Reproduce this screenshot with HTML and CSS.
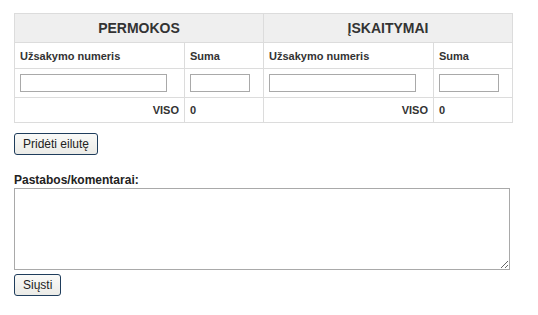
FILE: index.html
```html
<!DOCTYPE html>
<html lang="lt">
<head>
    <meta charset="UTF-8">
    <title>Permokos ir įskaitymai</title>
    <link rel="stylesheet" href="styles.css">
</head>
<body>
    <div class="page">
        <!-- Lentelė su permokomis ir įskaitymais -->
        <table class="grid">
            <colgroup>
                <col class="col-num">
                <col class="col-sum">
                <col class="col-num">
                <col class="col-sum">
            </colgroup>
            <tr class="head">
                <th colspan="2">PERMOKOS</th>
                <th colspan="2">ĮSKAITYMAI</th>
            </tr>
            <tr class="labels">
                <td>Užsakymo numeris</td>
                <td>Suma</td>
                <td>Užsakymo numeris</td>
                <td>Suma</td>
            </tr>
            <tr class="inputs">
                <td><input type="text" class="field-num"></td>
                <td><input type="text" class="field-sum"></td>
                <td><input type="text" class="field-num"></td>
                <td><input type="text" class="field-sum"></td>
            </tr>
            <tr class="total">
                <td class="total-label">VISO</td>
                <td>0</td>
                <td class="total-label">VISO</td>
                <td>0</td>
            </tr>
        </table>

        <button class="btn btn-add">Pridėti eilutę</button>

        <label class="notes-label" for="notes">Pastabos/komentarai:</label>
        <textarea id="notes" class="notes"></textarea>

        <button class="btn">Siųsti</button>
    </div>
</body>
</html>
```

FILE: styles.css
```css
body {
    margin: 0;
    font-family: "Liberation Sans", Arial, sans-serif;
    color: #222;
}
.page {
    padding: 13px 14px;
    display: flex;
    flex-direction: column;
    align-items: flex-start;
}
.grid {
    width: 499px;
    border-collapse: collapse;
    table-layout: fixed;
}
.col-num {
    width: 170px;
}
.col-sum {
    width: 79px;
}
.grid th,
.grid td {
    border: 1px solid #dcdcdc;
    padding: 0 5px;
    text-align: left;
}
.head th {
    height: 28px;
    background-color: #efefef;
    font-size: 14px;
    font-weight: bold;
    text-align: center;
    color: #333;
}
.labels td {
    height: 25px;
    font-size: 11px;
    font-weight: bold;
    color: #333;
}
.inputs td {
    height: 28px;
}
.total td {
    height: 24px;
    font-size: 11px;
    font-weight: bold;
    color: #333;
}
.total td.total-label {
    text-align: right;
}
.inputs input {
    box-sizing: border-box;
    height: 18px;
    border: 1px solid #a9a9a9;
    padding: 1px 2px;
    margin: 0;
    display: block;
}
.field-num {
    width: 147px;
}
.field-sum {
    width: 60px;
}
.btn {
    font-family: "Liberation Sans", Arial, sans-serif;
    font-size: 12px;
    color: #222;
    height: 22px;
    padding: 0 8px;
    border: 1px solid #1f3d5c;
    border-radius: 3px;
    background: linear-gradient(#fafaf8, #ebebe7);
}
.btn-add {
    margin-top: 10px;
}
.notes-label {
    margin-top: 18px;
    font-size: 12px;
    font-weight: bold;
    color: #222;
}
.notes {
    box-sizing: border-box;
    width: 496px;
    height: 82px;
    margin: 1px 0 4px;
    border: 1px solid #a9a9a9;
}
```
